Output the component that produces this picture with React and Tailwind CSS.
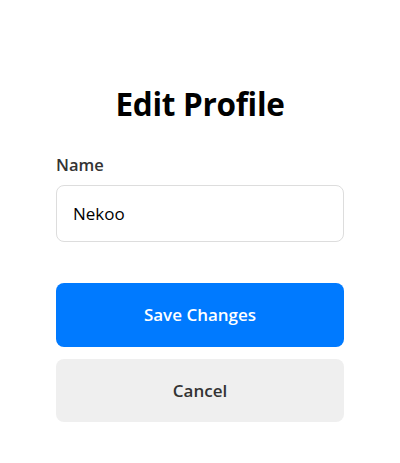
import React from "react";

const App = () => {
  return (
    <div
      className="min-h-[463px] bg-white flex justify-center"
      style={{ fontFamily: '"Open Sans", "Noto Sans", sans-serif' }}
    >
      <div className="w-[288px] pt-[84px] flex flex-col">
        <h1 className="text-center text-[31.5px] leading-[40px] font-bold text-black tracking-[-0.3px]">
          Edit Profile
        </h1>

        <label className="mt-[30px] text-[16.5px] leading-[22px] font-semibold text-[#333]">
          Name
        </label>
        <input
          className="mt-[9px] h-[57px] w-full rounded-lg border border-[#dddddd] px-4 text-[17px] text-black outline-none"
          defaultValue="Nekoo"
        />

        <button className="mt-[41px] h-[64px] w-full rounded-lg bg-[#007aff] text-[17px] font-semibold text-white">
          Save Changes
        </button>
        <button className="mt-[12px] h-[63px] w-full rounded-lg bg-[#efefef] text-[17px] font-semibold text-[#333]">
          Cancel
        </button>
      </div>
    </div>
  );
};

export default App;
